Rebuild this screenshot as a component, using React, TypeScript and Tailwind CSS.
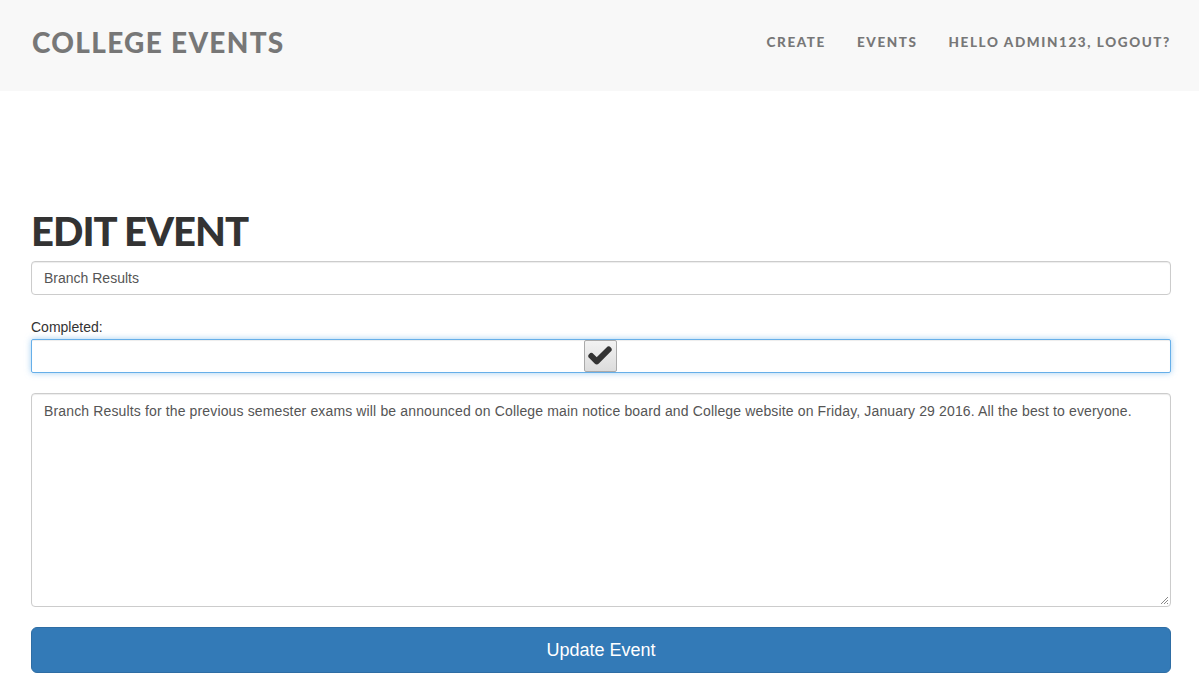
import { Check } from 'lucide-react'

const NAV = ['Create', 'Events', 'Hello admin123, Logout?']

export default function App() {
  return (
    <div className="min-h-[691px] bg-white font-['Liberation_Sans',Arial,sans-serif] text-[14px] text-[#333]">
      <header className="h-[91px] bg-[#f8f8f8] flex items-center justify-between pl-[32px] pr-[28px]">
        <div className="font-['Lato',sans-serif] font-black text-[28px] text-[#777] uppercase tracking-[1.3px] pb-[8px]">
          College Events
        </div>
        <nav className="flex gap-[31px] pb-[6px]">
          {NAV.map((item) => (
            <a
              key={item}
              className="font-['Lato',sans-serif] font-black text-[13.5px] uppercase tracking-[1.6px] text-[#777]"
            >
              {item}
            </a>
          ))}
        </nav>
      </header>

      <main className="pl-[31px] pr-[28px] pt-[116px]">
        <h1 className="font-['Lato',sans-serif] font-black uppercase text-[40px] leading-[48px] text-[#333] tracking-[-1px] mb-[6px]">
          Edit Event
        </h1>

        <div className="h-[34px] border border-[#ccc] rounded-[4px] px-[12px] flex items-center text-[#555] shadow-[inset_0_1px_1px_rgba(0,0,0,0.075)]">
          Branch Results
        </div>

        <label className="block mt-[22px] mb-[2px] leading-[20px]">Completed:</label>
        <div className="h-[34px] border border-[#66afe9] rounded-[2px] flex items-center justify-center shadow-[inset_0_1px_1px_rgba(0,0,0,0.075),0_0_6px_rgba(102,175,233,0.6)]">
          <div className="w-[33px] h-[32px] -ml-[2px] bg-gradient-to-b from-[#f2f2f2] to-[#dcdcdc] border border-[#aaa] rounded-[2px] flex items-center justify-center">
            <Check size={26} strokeWidth={5.5} className="text-[#333]" />
          </div>
        </div>

        <div className="mt-[20px] h-[214px] border border-[#ccc] rounded-[4px] px-[12px] py-[7px] text-[#555] leading-[20px] tracking-[0.14px] shadow-[inset_0_1px_1px_rgba(0,0,0,0.075)] relative">
          Branch Results for the previous semester exams will be announced on College main notice board and College website on Friday, January 29 2016. All the best to everyone.
          <svg className="absolute right-[2px] bottom-[2px]" width="8" height="8" viewBox="0 0 8 8">
            <path d="M8 1 L1 8 M8 4 L4 8 M8 7 L7 8" stroke="#888" strokeWidth="1" />
          </svg>
        </div>

        <button className="mt-[20px] w-full h-[46px] bg-[#337ab7] border border-[#2e6da4] rounded-[6px] text-white text-[18px]">
          Update Event
        </button>
      </main>
    </div>
  )
}
